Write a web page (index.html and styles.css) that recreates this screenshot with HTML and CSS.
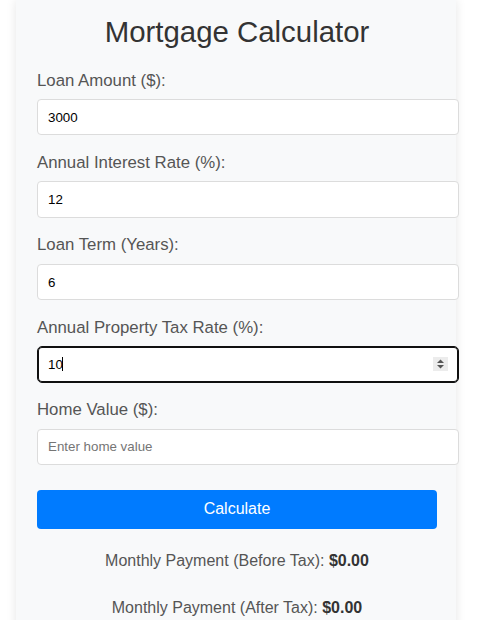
FILE: index.html
```html
<!DOCTYPE html>
<html lang="en">
<head>
<meta charset="utf-8">
<title>Mortgage Calculator</title>
<link rel="stylesheet" href="styles.css">
</head>
<body>
<div class="container">
  <h1 class="title">Mortgage Calculator</h1>
  <div class="field">
    <label class="label">Loan Amount ($):</label>
    <input class="input" type="text" value="3000">
  </div>
  <div class="field">
    <label class="label">Annual Interest Rate (%):</label>
    <input class="input" type="text" value="12">
  </div>
  <div class="field">
    <label class="label">Loan Term (Years):</label>
    <input class="input" type="text" value="6">
  </div>
  <div class="field">
    <label class="label">Annual Property Tax Rate (%):</label>
    <div class="input-wrap">
      <input class="input input-focused" type="text" value="10">
      <span class="caret"></span>
      <span class="spinner">
        <svg width="15" height="14" viewBox="0 0 15 14">
          <path d="M4 6 L7.5 2.5 L11 6 Z" fill="#555"/>
          <path d="M4 8 L7.5 11.5 L11 8 Z" fill="#555"/>
        </svg>
      </span>
    </div>
  </div>
  <div class="field">
    <label class="label">Home Value ($):</label>
    <input class="input" type="text" placeholder="Enter home value">
  </div>
  <button class="btn" type="button">Calculate</button>
  <div class="results">
    <p class="result">Monthly Payment (Before Tax): <strong>$0.00</strong></p>
    <p class="result">Monthly Payment (After Tax): <strong>$0.00</strong></p>
  </div>
</div>
</body>
</html>
```

FILE: styles.css
```css
html, body {
  margin: 0;
  padding: 0;
  background: #ffffff;
  font-family: "Liberation Sans", Arial, sans-serif;
}

.container {
  width: 400px;
  margin: 0 0 0 16px;
  padding: 14.6px 19px 30px 21px;
  background: #f8f9fa;
  box-shadow: 0 0 10px rgba(0, 0, 0, 0.1);
}

.title {
  margin: 0 0 22px;
  font-size: 29.4px;
  font-weight: normal;
  line-height: normal;
  text-align: center;
  color: #333333;
}

.field {
  margin-bottom: 17.6px;
}

.label {
  display: block;
  margin-bottom: 8.5px;
  font-size: 16.8px;
  line-height: normal;
  color: #555555;
}

.input {
  display: block;
  width: 100%;
  height: 14.3px;
  margin: 0;
  padding: 10px;
  border: 1px solid #dcdcdc;
  border-radius: 4px;
  background: #ffffff;
  font-family: "Liberation Sans", Arial, sans-serif;
  font-size: 13.33px;
  color: #000000;
  outline: none;
}

.input::placeholder {
  color: #757575;
}

.input-wrap {
  position: relative;
}

.input-focused {
  border-color: #101010;
  border-radius: 5px;
  box-shadow: inset 0 0 0 1px #101010;
}

.caret {
  position: absolute;
  left: 25px;
  top: 11px;
  width: 1px;
  height: 14px;
  background: #000000;
}

.spinner {
  position: absolute;
  left: 396px;
  top: 11px;
  width: 15px;
  height: 14px;
  background: #ececec;
  display: block;
}

.spinner svg {
  display: block;
}

.btn {
  display: block;
  width: 400px;
  height: 38.3px;
  margin: 25.4px 0 0;
  padding: 0;
  border: none;
  border-radius: 4px;
  background: #007bff;
  color: #ffffff;
  font-family: "Liberation Sans", Arial, sans-serif;
  font-size: 16px;
}

.results {
  display: flex;
  flex-direction: column;
  gap: 28.9px;
  margin-top: 23px;
}

.result {
  margin: 0;
  font-size: 16px;
  line-height: normal;
  text-align: center;
  color: #555555;
}

.result strong {
  color: #333333;
  font-weight: bold;
}
```
